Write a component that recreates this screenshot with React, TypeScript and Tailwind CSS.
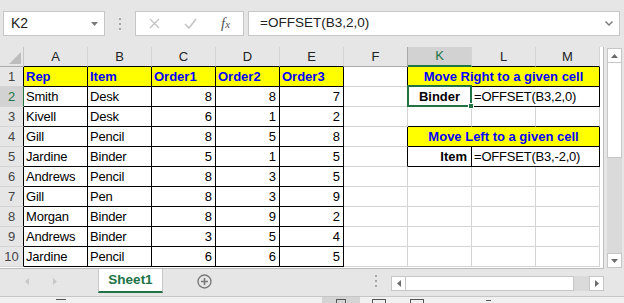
import clsx from 'clsx'

const FONT = "font-['Liberation_Sans',Arial,sans-serif]"

type Kind = 'head' | 'text' | 'num' | 'title' | 'center' | 'right' | 'formula' | 'blank'
type Cell = { v?: string | number; kind: Kind; span?: 2 | 3; r?: boolean; b?: boolean; sel?: boolean }

const data: (string | number)[][] = [
	['Rep', 'Item', 'Order1', 'Order2', 'Order3'],
	['Smith', 'Desk', 8, 8, 7],
	['Kivell', 'Desk', 6, 1, 2],
	['Gill', 'Pencil', 8, 5, 8],
	['Jardine', 'Binder', 5, 1, 5],
	['Andrews', 'Pencil', 8, 3, 5],
	['Gill', 'Pen', 8, 3, 9],
	['Morgan', 'Binder', 8, 9, 2],
	['Andrews', 'Binder', 3, 5, 4],
	['Jardine', 'Pencil', 6, 6, 5]
]

const rows: Cell[][] = data.map((row, i) => {
	const n = i + 1
	const cells: Cell[] = row.map((v, j) => ({
		v,
		kind: n === 1 ? 'head' : j < 2 ? 'text' : 'num',
		r: true,
		b: true
	}))
	cells.push({ kind: 'blank', r: [1, 2, 4, 5].includes(n) })
	if (n === 1) cells.push({ v: 'Move Right to a given cell', kind: 'title', span: 3, r: true, b: true })
	else if (n === 2)
		cells.push(
			{ v: 'Binder', kind: 'center', r: true, b: true, sel: true },
			{ v: '=OFFSET(B3,2,0)', kind: 'formula', span: 2, r: true, b: true }
		)
	else if (n === 3) cells.push({ kind: 'blank', b: true }, { kind: 'blank', b: true }, { kind: 'blank', b: true })
	else if (n === 4) cells.push({ v: 'Move Left to a given cell', kind: 'title', span: 3, r: true, b: true })
	else if (n === 5)
		cells.push(
			{ v: 'Item', kind: 'right', r: true, b: true },
			{ v: '=OFFSET(B3,-2,0)', kind: 'formula', span: 2, r: true, b: true }
		)
	else cells.push({ kind: 'blank' }, { kind: 'blank' }, { kind: 'blank' })
	return cells
})

const kindCls: Record<Kind, string> = {
	head: 'bg-[#ffff00] font-bold text-[#0000ff] justify-start pl-[2px]',
	text: 'justify-start pl-[2px] tracking-[-0.2px]',
	num: 'justify-end pr-[3px]',
	title: 'bg-[#ffff00] font-bold text-[#0000ff] justify-center',
	center: 'font-bold justify-center',
	right: 'font-bold justify-end pr-[4px]',
	formula: 'justify-start pl-[2px] tracking-[-0.2px]',
	blank: ''
}

const colHeads = ['A', 'B', 'C', 'D', 'E', 'F', 'K', 'L', 'M']

const Tri = ({ dir, color = '#6b6b6b' }: { dir: 'up' | 'down' | 'left' | 'right'; color?: string }) => {
	const pts = {
		up: '0,4 3.5,0 7,4',
		down: '0,0 7,0 3.5,4',
		left: '4,0 4,7 0,3.5',
		right: '0,0 0,7 4,3.5'
	}[dir]
	const vertical = dir === 'up' || dir === 'down'
	return (
		<svg width={vertical ? 7 : 4} height={vertical ? 4 : 7} viewBox={vertical ? '0 0 7 4' : '0 0 4 7'}>
			<polygon points={pts} fill={color} />
		</svg>
	)
}

const Dots = () => (
	<div className="flex flex-col gap-[3px]">
		<span className="w-[2px] h-[2px] bg-[#a6a6a6]" />
		<span className="w-[2px] h-[2px] bg-[#a6a6a6]" />
		<span className="w-[2px] h-[2px] bg-[#a6a6a6]" />
	</div>
)

export default function App() {
	return (
		<div className={clsx('w-[624px] h-[303px] bg-[#e6e6e6] overflow-hidden flex flex-col text-[13px] text-black', FONT)}>
			{/* Formula bar */}
			<div className="h-[47px] flex items-start pt-[11px] shrink-0">
				<div className="ml-[3px] w-[102px] h-[25px] bg-white border border-[#c6c6c6] flex items-center justify-between pl-[7px] pr-[6px] text-[14px] text-[#222]">
					<span>K2</span>
					<Tri dir="down" color="#7a7a7a" />
				</div>
				<div className="w-[30px] h-[25px] flex items-center justify-center">
					<Dots />
				</div>
				<div className="w-[109px] h-[25px] bg-white border border-[#c6c6c6] flex items-center">
					<svg width="11" height="11" viewBox="0 0 11 11" className="ml-[13px]">
						<path d="M1 1 L10 10 M10 1 L1 10" stroke="#c4c4c4" strokeWidth="1.4" />
					</svg>
					<svg width="13" height="11" viewBox="0 0 13 11" className="ml-[24px]">
						<path d="M1 6 L5 10 L12 1" stroke="#c4c4c4" strokeWidth="1.6" fill="none" />
					</svg>
					<span className="ml-[24px] font-['Liberation_Serif',serif] italic text-[15px] text-[#555] leading-none">
						f<span className="text-[11px]">x</span>
					</span>
				</div>
				<div className="ml-[4px] w-[372px] h-[25px] bg-white border border-[#c6c6c6] flex items-center justify-between pl-[11px] pr-[6px] text-[13.5px] text-[#222]">
					<span>=OFFSET(B3,2,0)</span>
					<svg width="8" height="5" viewBox="0 0 8 5">
						<path d="M0.5 0.5 L4 4 L7.5 0.5" stroke="#7a7a7a" strokeWidth="1.4" fill="none" />
					</svg>
				</div>
			</div>

			{/* Sheet area */}
			<div className="flex h-[222px] shrink-0">
				<div className="w-[604px] h-[222px] bg-white border-r border-b border-[#bdbdbd] overflow-hidden">
					<div className="grid grid-cols-[24px_repeat(9,64px)] auto-rows-[20px] w-[600px]">
						{/* corner */}
						<div className="relative bg-[#e6e6e6] border-r border-b border-r-[#c6c6c6] border-b-[#ababab]">
							<svg width="12" height="12" viewBox="0 0 12 12" className="absolute right-[2px] bottom-[2px]">
								<polygon points="12,0 12,12 0,12" fill="#bdbdbd" />
							</svg>
						</div>
						{colHeads.map((h, j) => {
							const active = h === 'K'
							return (
								<div
									key={h}
									className={clsx(
										'flex items-center justify-center border-r',
										active ? 'bg-[#d2d2d2] text-[#217346] border-b-2 border-b-[#217346]' : 'bg-[#e6e6e6] text-[#222] border-b',
										h === 'F' ? 'border-r-[#a9a9a9]' : 'border-r-[#d4d4d4]',
										!active && (j < 5 || j > 6 ? 'border-b-black' : 'border-b-[#ababab]')
									)}
								>
									{h}
								</div>
							)
						})}
						{rows.map((cells, i) => (
							<Row key={i} n={i + 1} cells={cells} />
						))}
					</div>
				</div>
				{/* vertical scrollbar */}
				<div className="ml-[3px] mt-[1px] w-[15px] h-[220px] bg-[#dadada] flex flex-col">
					<div className="h-[15px] bg-white border border-[#c6c6c6] flex items-center justify-center">
						<Tri dir="up" />
					</div>
					<div className="h-[95px] bg-white border border-t-0 border-[#c6c6c6]" />
					<div className="flex-1" />
					<div className="h-[15px] bg-white border border-[#c6c6c6] flex items-center justify-center">
						<Tri dir="down" />
					</div>
				</div>
			</div>

			{/* Sheet tabs */}
			<div className="h-[27px] flex items-start shrink-0">
				<div className="w-[98px] h-[24px] flex items-center">
					<span className="ml-[25px]">
						<Tri dir="left" color="#c8c8c8" />
					</span>
					<span className="ml-[24px]">
						<Tri dir="right" color="#c8c8c8" />
					</span>
				</div>
				<div className="w-[65px] h-[24px] bg-white border-x border-[#c6c6c6] border-b-2 border-b-[#217346] flex items-center justify-center font-bold text-[#217346] text-[13.5px]">
					Sheet1
				</div>
				<div className="ml-[34px] h-[24px] flex items-center">
					<svg width="15" height="15" viewBox="0 0 15 15">
						<circle cx="7.5" cy="7.5" r="6.5" stroke="#7a7a7a" strokeWidth="1.4" fill="none" />
						<path d="M7.5 4 V11 M4 7.5 H11" stroke="#7a7a7a" strokeWidth="1.6" />
					</svg>
				</div>
				<div className="ml-[163px] h-[24px] flex items-center">
					<Dots />
				</div>
				<div className="ml-[14px] mt-[7px] w-[213px] h-[15px] flex bg-[#dadada]">
					<div className="w-[15px] h-[15px] bg-white border border-[#c6c6c6] flex items-center justify-center">
						<Tri dir="left" />
					</div>
					<div className="w-[168px] h-[15px] bg-white border border-l-0 border-[#c6c6c6]" />
					<div className="flex-1" />
					<div className="w-[15px] h-[15px] bg-white border border-[#c6c6c6] flex items-center justify-center">
						<Tri dir="right" />
					</div>
				</div>
			</div>

			{/* Status bar */}
			<div className="flex-1 bg-[#f0f0f0] border-t border-[#c6c6c6] flex items-start">
				<div className="ml-[56px] mt-[2px] w-[10px] h-[3px] border-t border-[#555]" />
				<div className="ml-[256px] w-[38px] h-full bg-[#d4d4d4] flex justify-center">
					<div className="mt-[2px] w-[10px] h-[8px] border border-[#555]" />
				</div>
				<div className="ml-[12px] mt-[2px] w-[14px] h-[8px] border border-[#555]" />
				<div className="ml-[24px] mt-[2px] w-[14px] h-[8px] border border-[#555]" />
				<div className="ml-[62px] mt-[3px] w-[5px] h-[1px] bg-[#555]" />
			</div>
		</div>
	)
}

function Row({ n, cells }: { n: number; cells: Cell[] }) {
	const active = n === 2
	return (
		<>
			<div
				className={clsx(
					'flex items-center justify-center border-r border-b border-b-[#d4d4d4]',
					active ? 'bg-[#d2d2d2] text-[#217346] border-r-[#217346]' : 'bg-[#e6e6e6] text-[#444] border-r-black'
				)}
			>
				{n}
			</div>
			{cells.map((c, j) => (
				<div
					key={j}
					className={clsx(
						'relative flex items-center border-r border-b whitespace-nowrap',
						c.span === 3 && 'col-span-3',
						c.span === 2 && 'col-span-2',
						c.r ? 'border-r-black' : 'border-r-[#d4d4d4]',
						c.b ? 'border-b-black' : 'border-b-[#d4d4d4]',
						kindCls[c.kind]
					)}
				>
					{c.v}
					{c.sel && (
						<div className="absolute left-[-1px] top-[-2px] right-[-1px] bottom-[-1px] border-2 border-[#217346] z-10">
							<div className="absolute right-[-4px] bottom-[-4px] w-[6px] h-[6px] bg-[#217346] border border-white" />
						</div>
					)}
				</div>
			))}
		</>
	)
}
